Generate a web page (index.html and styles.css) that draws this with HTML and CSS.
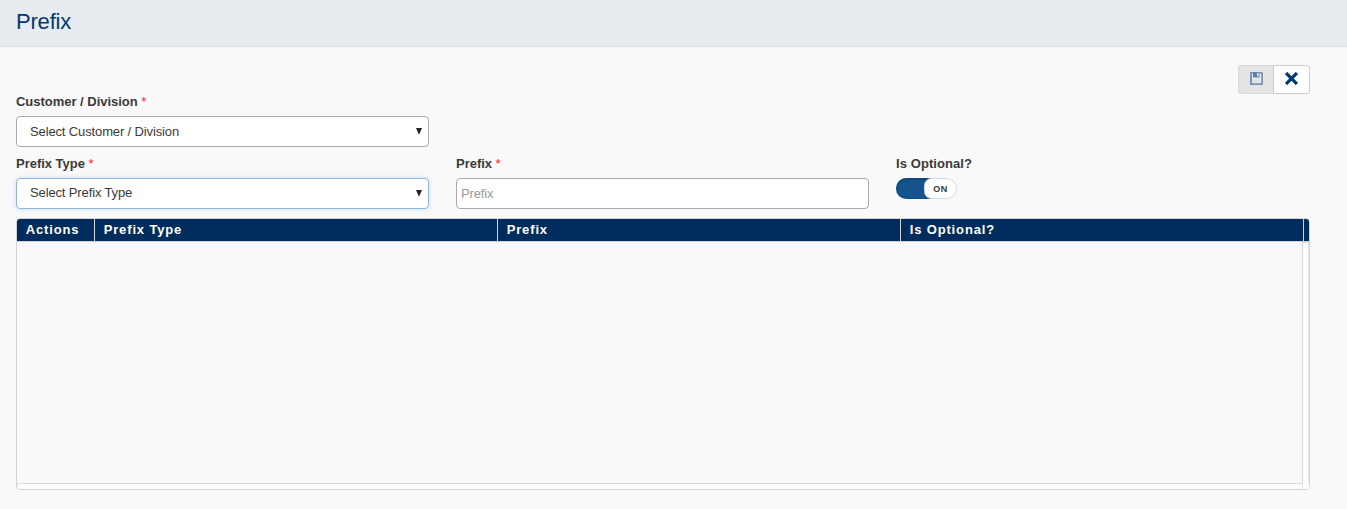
FILE: index.html
```html
<!DOCTYPE html>
<html lang="en">
<head>
<meta charset="utf-8">
<title>Prefix</title>
<link rel="stylesheet" href="styles.css">
</head>
<body>
<header class="page-header"><h1 class="page-title">Prefix</h1></header>
<main class="content">
  <div class="toolbar">
    <button class="tool-btn save" disabled aria-label="Save">
      <svg width="13" height="13" viewBox="0 0 13 13"><path fill="#7893b3" fill-rule="evenodd" d="M0 0H12L13 1V13H0ZM2 1.5V11.3H11.3V1.5H9.5V5.5H3V1.5Z"/><path fill="#5f80a6" d="M3 0H7V5H3Z"/><path fill="#dfe3e8" d="M7 1H8.5V4H7Z"/></svg>
    </button>
    <button class="tool-btn close" aria-label="Close">
      <svg width="13" height="13" viewBox="0 0 13 13"><path d="M2.2 2.2L10.8 10.8M10.8 2.2L2.2 10.8" stroke="#003a70" stroke-width="3.3" stroke-linecap="square" fill="none"/></svg>
    </button>
  </div>
  <div class="form">
    <div class="field">
      <label class="label"><span>Customer / Division</span> <span class="req">*</span></label>
      <div class="control select"><span>Select Customer / Division</span><svg class="arrow" width="6" height="6" viewBox="0 0 6 6"><path d="M0 0H6L3.4 6H2.6Z"/></svg></div>
    </div>
  </div>
  <div class="form second">
    <div class="field">
      <label class="label"><span>Prefix Type</span> <span class="req">*</span></label>
      <div class="control select focused"><span>Select Prefix Type</span><svg class="arrow" width="6" height="6" viewBox="0 0 6 6"><path d="M0 0H6L3.4 6H2.6Z"/></svg></div>
    </div>
    <div class="field">
      <label class="label"><span>Prefix</span> <span class="req">*</span></label>
      <input class="control input" type="text" placeholder="Prefix">
    </div>
    <div class="field">
      <label class="label optional"><span>Is Optional?</span></label>
      <div class="switch"><span class="track"></span><span class="knob">ON</span></div>
    </div>
  </div>
  <div class="grid">
    <div class="grid-head">
      <div class="cell">Actions</div><div class="cell">Prefix Type</div><div class="cell">Prefix</div><div class="cell">Is Optional?</div><div class="cell"></div>
    </div>
    <div class="grid-body">
      <div class="viewport"></div><div class="vscroll"></div>
      <div class="hscroll"></div><div class="corner"></div>
    </div>
  </div>
</main>
</body>
</html>
```

FILE: styles.css
```css
* { box-sizing: border-box; }
body { margin: 0; background: #f9f9f9; color: #3a3a3a; font-family: "Liberation Sans", Arial, sans-serif; font-size: 13px; }
.page-header { height: 47px; background: #e8ebf0; border-bottom: 1px solid #d9dfe6; padding: 8px 16px; }
.page-title { margin: 0; font-size: 22px; line-height: 27px; font-weight: 400; letter-spacing: -.2px; color: #003a70; }
.content { padding: 18px 37px 0 16px; }
.toolbar { display: flex; justify-content: flex-end; height: 29px; }
.tool-btn { height: 29px; padding: 0 0 2px; display: flex; align-items: center; justify-content: center; border: 1px solid #ccc; }
.save { width: 35px; background: #e4e4e4; border-color: #d9d9d9; border-right: 0; border-radius: 3px 0 0 3px; }
.close { width: 37px; background: #fff; border-radius: 0 3px 3px 0; }
.form { display: grid; grid-template-columns: 413px 413px 1fr; column-gap: 27px; }
.second { margin-top: 6px; }
.label { display: block; height: 22px; line-height: 15px; font-weight: 700; letter-spacing: -.02px; white-space: nowrap; }
.second .label { height: 25px; padding-top: 3px; }
.label.optional { letter-spacing: .08px; }
.req { color: #f22; font-weight: 400; }
.control { height: 31px; width: 100%; border: 1px solid #aaa; border-radius: 4px; background: #fff; letter-spacing: -.13px; }
.select { display: flex; align-items: center; justify-content: space-between; padding: 0 6px 1px 13px; }
.focused { border-color: #91b7dc; box-shadow: 0 0 5px #c5dff6; padding-bottom: 2px; }
.arrow { fill: #222; }
.input { font: 13px "Liberation Sans", Arial, sans-serif; padding: 1px 4px; }
.input::placeholder { color: #999; opacity: 1; }
.switch { width: 61px; height: 21px; display: flex; }
.track { width: 36px; height: 21px; border-radius: 11px 0 0 11px; background: #15538c; box-shadow: inset 0 1px 3px #0b4071; }
.knob { width: 33px; height: 21px; margin-left: -8px; border: 1px solid #cbdbe9; border-radius: 8px 11px 11px 8px; background: #fff; font-size: 9px; font-weight: 700; line-height: 20px; text-align: center; letter-spacing: .4px; }
.grid { margin-top: 9px; height: 272px; border: 1px solid #d4d4d4; border-radius: 4px; overflow: hidden; }
.grid-head { display: grid; grid-template-columns: 78px 403px 403px 403px 1fr; height: 23px; background: #002d5d; border-bottom: 1px solid #d4d4d4; color: #fff; }
.cell { border-right: 1px solid #d4d4d4; padding-left: 8.7px; line-height: 21px; font-weight: 700; letter-spacing: .85px; }
.cell:last-child { border: 0; }
.grid-body { display: grid; grid-template-columns: 1285px 1fr; grid-template-rows: 241px 1fr; height: 247px; }
.vscroll { background: #fdfdfd; border-left: 1px solid #dcdcdc; border-right: 1px solid #e6e6e6; border-top: 1px solid #dcdcdc; }
.hscroll { background: #fdfdfd; border-top: 1px solid #dcdcdc; border-left: 1px solid #e6e6e6; }
.corner { background: #fff; border-left: 1px solid #e2e2e2; }
```
